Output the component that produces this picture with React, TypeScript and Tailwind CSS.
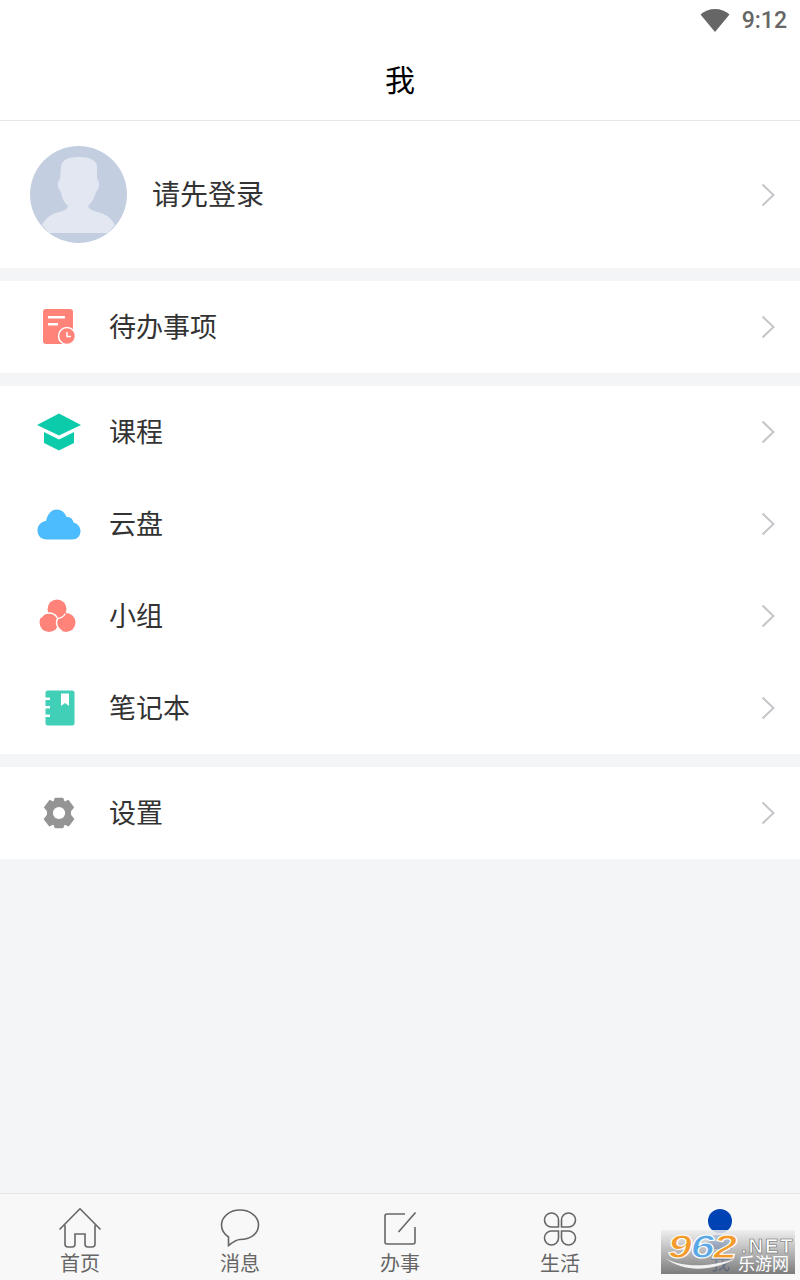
import type { ReactNode } from "react";

const cjk = { fontFamily: '"Noto Sans CJK SC", sans-serif' };
const latin = { fontFamily: '"Liberation Sans", sans-serif' };

const Chevron = () => (
  <svg width="16" height="24" viewBox="0 0 16 24" fill="none" stroke="#c4c6c9" strokeWidth="2">
    <path d="M2.5 1.5 L13.5 12 L2.5 22.5" />
  </svg>
);

const TodoIcon = () => (
  <svg width="34" height="38" viewBox="0 0 34 38">
    <rect x="1" y="1" width="30" height="35" rx="3" fill="#ff8379" />
    <rect x="6" y="8" width="17" height="2.5" fill="#fff" />
    <rect x="6" y="15" width="10" height="2.5" fill="#fff" />
    <circle cx="25" cy="28" r="8.5" fill="#ff8379" stroke="#fff" strokeWidth="1.5" />
    <path d="M25 24 V28.5 H29" fill="none" stroke="#fff" strokeWidth="1.5" />
  </svg>
);

const CapIcon = () => (
  <svg width="46" height="38" viewBox="0 0 46 38">
    <path d="M23 0.5 L45 12 L23 22.5 L1 12 Z" fill="#0ccbab" />
    <path d="M8 19 L23 26.5 L38 19 V30 L23 37.5 L8 30 Z" fill="#0ccbab" />
  </svg>
);

const CloudIcon = () => (
  <svg width="44" height="31" viewBox="0 0 44 31">
    <path
      d="M10 30.5 C4 30.5 0.5 26.5 0.5 21.5 C0.5 16 4.5 12.5 9 12 C10.5 5 14.5 0.5 19.5 0.5 C24.5 0.5 28 3.5 29.5 8 C33 7.5 36 10 36.5 13.5 C40.5 14.5 43.5 18 43.5 22 C43.5 27 40 30.5 35 30.5 Z"
      fill="#4cbcff"
    />
  </svg>
);

const GroupIcon = () => (
  <svg width="37" height="34" viewBox="0 0 37 34" className="ml-[-2px]">
    <circle cx="18" cy="10" r="9.5" fill="#ff8379" />
    <circle cx="10" cy="23.5" r="9.5" fill="#ff8379" />
    <circle cx="27" cy="23.5" r="9.5" fill="#ff8379" />
    <g fill="none" stroke="#fff" strokeWidth="1.4">
      <path d="M1.8 18.7 A9.5 9.5 0 0 1 18.2 18.75" />
      <path d="M26.2 14.75 A9.5 9.5 0 0 1 18 19.5" />
      <path d="M23 32.1 A9.5 9.5 0 0 1 18.8 18.8" />
    </g>
  </svg>
);

const NotebookIcon = () => (
  <svg width="30" height="36" viewBox="0 0 30 36" className="ml-[3px]">
    <rect x="0.5" y="0.5" width="29" height="35" rx="2.5" fill="#41cfb7" />
    <rect x="0" y="7.5" width="5" height="2.5" fill="#fff" />
    <rect x="0" y="16" width="5" height="2.5" fill="#fff" />
    <rect x="0" y="24.5" width="5" height="2.5" fill="#fff" />
    <path d="M16 3.5 H24 V16 L20 13 L16 16 Z" fill="#fff" />
  </svg>
);

const GearIcon = () => (
  <svg width="32" height="32" viewBox="0 0 34 34">
    <path
      d="M13 1.5 H21 L22.5 6 L26.8 3.8 L32.2 11 L29 15 V19 L32.5 23.5 L27 30.5 L22.5 28.2 L21 32.5 H13 L11.5 28.2 L7 30.5 L1.5 23.5 L5 19 V15 L1.8 11 L7.2 3.8 L11.5 6 Z"
      fill="#949494"
      stroke="#949494"
      strokeWidth="1.5"
      strokeLinejoin="round"
    />
    <circle cx="17" cy="17" r="6.5" fill="#fff" />
  </svg>
);

const Avatar = () => (
  <svg width="97" height="97" viewBox="0 0 97 97" className="shrink-0">
    <circle cx="48.5" cy="48.5" r="48.5" fill="#c3cee1" />
    <path
      d="M31 20 C32 14 38 11 49 11 C60 11 66 14 67 20 L67 33 C70 36 70 42 66 46 C64 53 62 56 58 60 C59 64 64 65 71 67 C77 69 82 73 85 79 L78 87 H19 L12 79 C15 73 20 69 26 67 C33 65 37 64 38 60 C34 56 32 53 31 46 C27 42 27 36 30 33 Z"
      fill="#e2e7f1"
    />
  </svg>
);

const Row = ({ icon, label }: { icon: ReactNode; label: string }) => (
  <div className="flex h-[92px] items-center bg-white pr-[24px]">
    <div className="flex w-[109px] shrink-0 justify-center pl-[8px]">
      <div className="flex w-[46px] justify-center">{icon}</div>
    </div>
    <span className="flex-1 pb-[2px] text-[27px] text-[#333]">{label}</span>
    <Chevron />
  </div>
);

const Tab = ({ icon, label }: { icon: ReactNode; label: string }) => (
  <div className="flex flex-1 flex-col items-center pt-[14px]">
    <div className="flex h-[42px] items-start">{icon}</div>
    <span className="mt-[1px] text-[20px] leading-[24px] text-[#666]">{label}</span>
  </div>
);

const tabStroke = { fill: "none", stroke: "#666", strokeWidth: 1.6 };

export default function App() {
  return (
    <div className="relative flex h-[1280px] w-[800px] flex-col overflow-hidden bg-[#f4f5f7]" style={cjk}>
      <div className="flex h-[40px] items-center justify-end gap-[12px] bg-white pr-[13px]">
        <svg width="30" height="24" viewBox="0 0 30 24">
          <path d="M0.5 6.5 C8 -1 22 -1 29.5 6.5 L15 24 Z" fill="#666" />
        </svg>
        <span className="pt-[3px] text-[23px] font-medium text-[#666]" style={{ fontFamily: "Roboto, sans-serif" }}>
          9:12
        </span>
      </div>
      <div className="flex h-[81px] items-center justify-center border-b border-[#e6e7e9] bg-white pb-[3px] text-[30px] text-black">
        我
      </div>

      <div className="flex h-[147px] items-center bg-white pl-[30px] pr-[24px]">
        <Avatar />
        <span className="ml-[25px] flex-1 pb-[3px] text-[28px] text-[#333]">请先登录</span>
        <Chevron />
      </div>

      <div className="mt-[13px]">
        <Row icon={<TodoIcon />} label="待办事项" />
      </div>

      <div className="mt-[13px]">
        <Row icon={<CapIcon />} label="课程" />
        <Row icon={<CloudIcon />} label="云盘" />
        <Row icon={<GroupIcon />} label="小组" />
        <Row icon={<NotebookIcon />} label="笔记本" />
      </div>

      <div className="mt-[13px]">
        <Row icon={<GearIcon />} label="设置" />
      </div>

      <div className="mt-auto flex h-[87px] border-t border-[#e4e6ea] bg-[#f8f8f8]">
        <Tab
          label="首页"
          icon={
            <svg width="44" height="41" viewBox="0 0 44 41" {...tabStroke}>
              <path d="M1.5 21.5 L22 0.8 L42.5 21.5" />
              <path d="M7 17 V36 Q7 39 10 39 H14 Q17 39 17 36 V26 H27 V36 Q27 39 30 39 H34 Q37 39 37 36 V17" />
            </svg>
          }
        />
        <Tab
          label="消息"
          icon={
            <svg width="40" height="38" viewBox="0 0 40 38" className="mt-[1px]" {...tabStroke}>
              <path d="M20 1 C30 1 38.5 7.5 38.5 16 C38.5 25 30 30.5 20 30.5 C17.5 30.5 15.5 31 8.5 36.5 L8.5 28 C4 25 1.5 21 1.5 16 C1.5 7.5 10 1 20 1 Z" />
            </svg>
          }
        />
        <Tab
          label="办事"
          icon={
            <svg width="34" height="34" viewBox="0 0 34 34" className="mt-[4px]" {...tabStroke}>
              <path d="M22 2 H4 Q2 2 2 4 V30 Q2 32 4 32 H30 Q32 32 32 30 V15" />
              <path d="M32.5 0.5 L15.5 20" />
            </svg>
          }
        />
        <Tab
          label="生活"
          icon={
            <svg width="34" height="34" viewBox="0 0 34 34" className="mt-[4px]" {...tabStroke}>
              <path d="M8.5 1 A7 7 0 0 1 15.5 8 V15 H8.5 A7 7 0 0 1 8.5 1 Z" />
              <path d="M25.5 1 A7 7 0 0 0 18.5 8 V15 H25.5 A7 7 0 0 0 25.5 1 Z" />
              <path d="M8.5 33 A7 7 0 0 0 15.5 26 V19 H8.5 A7 7 0 0 0 8.5 33 Z" />
              <path d="M25.5 33 A7 7 0 0 1 18.5 26 V19 H25.5 A7 7 0 0 1 25.5 33 Z" />
            </svg>
          }
        />
        <div className="flex flex-1 flex-col items-center pt-[15px]">
          <div className="h-[24px] w-[24px] rounded-full bg-[#0043b5]" />
          <div className="mt-[2px] h-[14px] w-[24px] rounded-t-[8px] bg-[#0043b5]" />
          <span className="mt-[1px] text-[20px] leading-[24px] text-[#0043b5]">我</span>
        </div>
      </div>

      {/* watermark sits on top of the last tab, the tab shows through a little */}
      <div className="absolute left-[661px] top-[1230px] h-[44px] w-[134px] bg-gradient-to-b from-[#eeeeee]/85 via-[#a8a8a8]/80 to-[#666]/85">
        <span
          className="absolute left-[7px] top-0 origin-left scale-x-[1.3] text-[33px] font-bold italic leading-[34px] tracking-[-1px] text-[#f39a2b] [-webkit-text-stroke:1px_#fff]"
          style={latin}
        >
          9<span className="text-[#5aa9e6]">6</span>2
        </span>
        <span
          className="absolute left-[80px] top-[6px] text-[20px] font-bold leading-[20px] tracking-[2px] text-white [-webkit-text-stroke:0.6px_#666]"
          style={latin}
        >
          .NET
        </span>
        <span className="absolute left-[77px] top-[23px] text-[17px] leading-[20px] text-white">乐游网</span>
        <svg width="76" height="16" viewBox="0 0 76 16" className="absolute left-[4px] top-[27px]">
          <path d="M0 1 C16 10 40 11 70 2 C46 15 18 15 0 1 Z" fill="#f2f2f2" />
        </svg>
      </div>
    </div>
  );
}
